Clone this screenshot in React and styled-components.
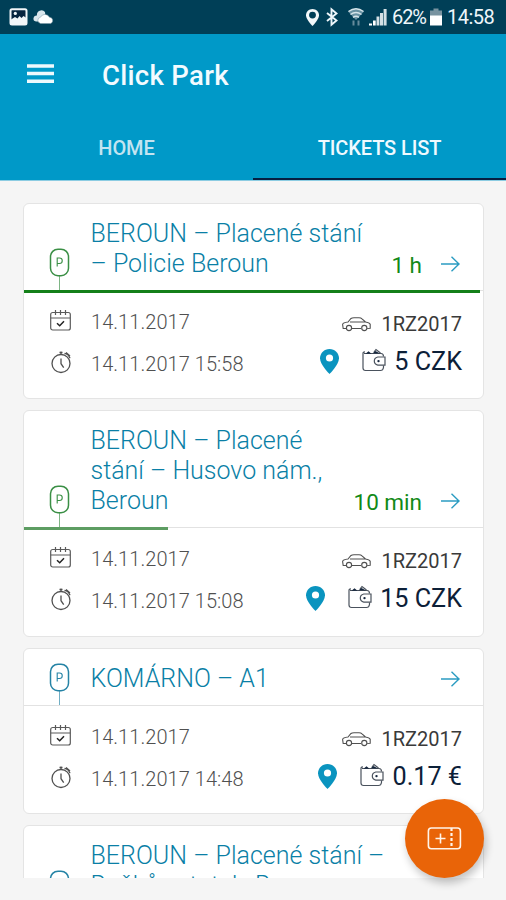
import React from "react";
import styled, { createGlobalStyle } from "styled-components";

const Global = createGlobalStyle`
  * { box-sizing: border-box; }
  body { margin: 0; background: #f5f5f5; font-family: Roboto, "Liberation Sans", sans-serif; }
  svg { display: block; flex: none; overflow: visible; }
`;

const Screen = styled.div`
  width: 506px;
  height: 900px;
  display: flex;
  flex-direction: column;
  overflow: hidden;
  background: #f5f5f5;
`;

const StatusBar = styled.div`
  height: 34px;
  flex: none;
  background: #003f57;
  color: #eef6fa;
  display: flex;
  align-items: center;
  justify-content: space-between;
  padding: 0 12px 0 9px;
`;

const StatusGroup = styled.div`
  display: flex;
  align-items: center;
  gap: ${(p) => p.$gap}px;
`;

const StatusText = styled.span`
  font-size: 20px;
  line-height: 36px;
  width: ${(p) => p.$width}px;
  white-space: nowrap;
  letter-spacing: ${(p) => p.$track}px;
`;

const AppBar = styled.header`
  height: 81px;
  flex: none;
  background: #0099c8;
  display: flex;
  align-items: center;
  padding-left: 27px;
`;

const AppTitle = styled.h1`
  margin: 2px 0 0 48px;
  font-size: 27.5px;
  font-weight: 500;
  color: #f3fbff;
  line-height: 36px;
  letter-spacing: 0.3px;
`;

const Tabs = styled.nav`
  height: 66px;
  flex: none;
  display: grid;
  grid-template-columns: 1fr 1fr;
  background: #0099c8;
  border-bottom: 1px solid #8ccce2;
`;

const Tab = styled.div`
  display: flex;
  align-items: center;
  justify-content: center;
  padding-top: 3px;
  font-size: 20px;
  font-weight: 500;
  letter-spacing: -0.1px;
  color: ${(p) => (p.$active ? "#effaff" : "#c3e4f1")};
  border-bottom: 2px solid ${(p) => (p.$active ? "#061f42" : "transparent")};
`;

const TicketList = styled.main`
  height: 697px;
  flex: none;
  overflow: hidden;
  padding: 22px 22px 0 23px;
  display: flex;
  flex-direction: column;
  gap: 11px;
`;

const Card = styled.article`
  flex: none;
  height: ${(p) => p.$height}px;
  background: #fff;
  border: 1px solid #e4e4e4;
  border-radius: 6px;
  display: flex;
  flex-direction: column;
`;

const CardHead = styled.div`
  height: ${(p) => p.$height}px;
  flex: none;
  display: flex;
  align-items: flex-end;
  padding: 0 23px 0 25px;
`;

const Place = styled.h2`
  margin: 0 0 11.5px 20.5px;
  flex: 1;
  font-size: 25px;
  line-height: 29.8px;
  font-weight: 300;
  color: #0a7fa6;
  white-space: pre;
`;

const Remaining = styled.span`
  font-size: 22.5px;
  line-height: 30px;
  color: #128a17;
  margin: 0 19px 10px 0;
`;

const ArrowSlot = styled.span`
  margin-bottom: 18px;
`;

const Track = styled.div`
  height: 3px;
  flex: none;
  background: linear-gradient(#e2e2e2, #e2e2e2) 0 0 / 100% 1px no-repeat;
`;

const Progress = styled.div`
  height: 3px;
  background: ${(p) => p.$color};
`;

const CardBody = styled.div`
  flex: 1;
  display: flex;
  justify-content: space-between;
  padding: 8px 21px 0 26px;
`;

const Column = styled.div`
  display: flex;
  flex-direction: column;
  align-items: ${(p) => p.$align};
`;

const InfoRow = styled.div`
  display: flex;
  align-items: center;
  height: 42px;
`;

const DateText = styled.span`
  font-size: 20px;
  font-weight: 300;
  color: #505050;
  margin-left: 20px;
  letter-spacing: 0.05px;
`;

const PlateRow = styled.div`
  display: flex;
  align-items: center;
  height: 46px;
`;

const Plate = styled.span`
  font-size: 20px;
  color: #3a3a3a;
  margin-left: 10px;
`;

const PriceRow = styled.div`
  display: flex;
  align-items: center;
  height: 28px;
`;

const Price = styled.span`
  font-size: 25.2px;
  color: #0c2038;
  margin-left: 8px;
`;

const WalletSlot = styled.span`
  margin-left: 23px;
`;

const Fab = styled.button`
  position: fixed;
  left: 405px;
  top: 799px;
  width: 79px;
  height: 79px;
  border: 0;
  padding: 0;
  border-radius: 50%;
  background: #e96408;
  box-shadow: 2px 5px 9px rgba(0, 0, 0, 0.24);
  display: flex;
  align-items: center;
  justify-content: center;
`;

const PictureIcon = () => (
  <svg width="19" height="18" viewBox="0 0 19 18">
    <rect x="1.5" y="1.2" width="16" height="15.3" rx="1.5" fill="#06243f" stroke="#f1f6f9" strokeWidth="2" />
    <circle cx="6.3" cy="5.4" r="1.6" fill="#f1f6f9" />
    <path d="M2 11.500l4-2.500 2.500 1.500 2-2.500 2 2 2-2 3 2V16H2z" fill="#f1f6f9" />
  </svg>
);

const CloudIcon = () => (
  <svg width="21" height="14" viewBox="0 0 21 14">
    <path d="M3 11.500a3 3 0 0 1 1-6A4.500 4.500 0 0 1 12 2l1 9.500z" fill="#d9e6ec" />
    <path d="M7.500 13.500a3.200 3.200 0 0 1 0-6.300 5 5 0 0 1 9 0 3.300 3.300 0 0 1 1.300 6.300z" fill="#fff" stroke="#7695a2" strokeWidth=".5" />
  </svg>
);

const Pin = ({ w, h, color, hole, holeColor = "#fff" }) => (
  <svg width={w} height={h} viewBox="0 0 19 25" preserveAspectRatio="none">
    <path d="M9.500 0C4.200 0 0 4.100 0 9.300 0 15.800 9.500 25 9.500 25S19 15.800 19 9.300C19 4.100 14.800 0 9.500 0z" fill={color} />
    <circle cx="9.500" cy="9" r={hole} fill={holeColor} />
  </svg>
);

const BluetoothIcon = () => (
  <svg width="12" height="18" viewBox="0 0 12 18">
    <path d="M1 5l9.500 7.500-5 4.300V1.200l5 4.300L1 13" fill="none" stroke="#eef6fa" strokeWidth="1.900" />
  </svg>
);

const WifiIcon = () => (
  <svg width="16" height="18" viewBox="0 0 16 18">
    <path d="M0 3.500q8-6 16 0L8 12z" fill="#9fbfcc" opacity=".65" />
    <path d="M.5 3.500q7.500-5.500 15 0M2.500 6.500q5.500-4 11 0M5 9.300q3-2.300 6 0" fill="none" stroke="#d5e4ea" strokeWidth="1.500" />
    <path d="M5.500 12.500v5M10.500 12.500v5" stroke="#668b9c" strokeWidth="2" />
  </svg>
);

const SignalIcon = () => (
  <svg width="18" height="18" viewBox="0 0 18 18">
    <path d="M0 17.500v-2h3v2zM4 17.500v-5h2.700v5z" fill="#fff" />
    <path d="M7.500 17.500V8.500h2.900v9zM11 17.500V5h3v12.500zM14.600 17.500V1h3v16.500z" fill="#d4e0e5" />
  </svg>
);

const BatteryIcon = () => (
  <svg width="12" height="18" viewBox="0 0 12 18">
    <path d="M3.500 .5h5v2H12V8H0V2.500h3.500z" fill="#7893a0" />
    <path d="M0 7.500h12V17.500H0z" fill="#fff" />
  </svg>
);

const MenuIcon = () => (
  <svg width="27" height="22" viewBox="0 0 27 22">
    <path d="M0 2h27M0 9.500h27M0 17.200h27" stroke="#eef9fd" strokeWidth="3.500" />
  </svg>
);

const ParkingIcon = ({ color }) => (
  <svg width="21" height="42" viewBox="0 0 21 42">
    <rect x="1.500" y="1.200" width="18" height="26.500" rx="7.500" fill="none" stroke={color} strokeWidth="1.500" />
    <path d="M8.200 18.500V10h2.300a2.700 2.700 0 0 1 0 5.500H8.200" fill="none" stroke={color} strokeWidth="1.100" />
    <path d="M10.500 28v14" stroke={color} strokeWidth="1" opacity=".65" />
  </svg>
);

const ArrowIcon = () => (
  <svg width="19" height="16" viewBox="0 0 19 16">
    <path d="M0 8h17.500M10.500.8L18 8l-7.500 7.200" fill="none" stroke="#2b9cc2" strokeWidth="1.400" />
  </svg>
);

const CalendarIcon = () => (
  <svg width="21" height="24" viewBox="0 0 21 24">
    <g fill="none" stroke="#5a5a5a" strokeWidth="1.200">
      <rect x=".7" y="2.500" width="19.600" height="17.500" rx="2" />
      <path d="M.7 8h19.600M5.500 0v5M10.500 0v5M15.500 0v5" />
      <path d="M7 13.200l2.700 2.500 4.300-4.400" stroke="#222" strokeWidth="1.500" />
    </g>
  </svg>
);

const ClockIcon = () => (
  <svg width="21" height="25" viewBox="0 0 21 25">
    <g fill="none" stroke="#505050" strokeWidth="1.300">
      <circle cx="11" cy="11.500" r="9" />
      <path d="M11-.5v3M9.500.5h3M11 6.500v5.200l2.700 4M14.500 1.300q4 .5 5.500 5M16 .5l4 3.600" />
    </g>
  </svg>
);

const CarIcon = () => (
  <svg width="29" height="15" viewBox="0 0 29 15">
    <g fill="none" stroke="#505050" strokeWidth="1.100">
      <path d="M4 11.500H1.200L.6 7.500Q1 5.500 6 5L9 1.500Q10 .7 12 .7h5q2 0 3 1.100L23.500 5q4 .6 4.700 2.300v4l-3 .2M10 11.500h9M8 5h15" />
      <circle cx="7" cy="11" r="2.600" />
      <circle cx="22.300" cy="11" r="2.600" />
    </g>
  </svg>
);

const WalletIcon = () => (
  <svg width="24" height="24" viewBox="0 0 24 24">
    <g fill="none" stroke="#4a525d" strokeWidth="1.200">
      <path d="M21.500 16.500v2q-.5 3-3 3H3.500Q1 21.500 1 19V4.500Q1 2.800 3 2.800M2 4.500h17q2.500 0 2.500 3M12 3l2-2.500L18.500 4" />
      <path d="M23 8v8.200h-7.200q-3.500-.8-3.500-4.100t3.500-4.100z" />
    </g>
    <path d="M3.500 4.800l3-2.500 3 2.500zM10.500 4.300l3-2.300 4.500 2.500z" fill="#15263d" />
    <circle cx="16.500" cy="12.100" r="1.200" fill="#15263d" />
  </svg>
);

const TicketIcon = () => (
  <svg width="35" height="23" viewBox="0 0 35 23">
    <g fill="none" stroke="#fff4ea" strokeWidth="1.600">
      <rect x="1.400" y="1" width="32" height="20.800" rx="3" />
      <path d="M13.500 6.500v10M8.500 11.500h10" />
      <path d="M24.500 1v21" strokeWidth="2.200" strokeDasharray="3 2" />
    </g>
  </svg>
);

const tickets = [
  { place: "BEROUN – Placené stání\n– Policie Beroun", remaining: "1 h", time: "14.11.2017 15:58", price: "5 CZK", height: 196, head: 86, progress: 456, bar: "#148019", mark: "#3a8f45" },
  { place: "BEROUN – Placené\nstání – Husovo nám.,\nBeroun", remaining: "10 min", time: "14.11.2017 15:08", price: "15 CZK", height: 227, head: 116, progress: 144, bar: "#5d9d62", mark: "#3a8f45" },
  { place: "KOMÁRNO – A1", time: "14.11.2017 14:48", price: "0.17 €", height: 166, head: 56, mark: "#2583a5" },
  { place: "BEROUN – Placené stání –\nBočkův statek, Beroun", time: "14.11.2017 14:28", price: "5 CZK", height: 196, head: 86, mark: "#2583a5" },
];

const Ticket = ({ data }) => (
  <Card $height={data.height}>
    <CardHead $height={data.head}>
      <ParkingIcon color={data.mark} />
      <Place>{data.place}</Place>
      {data.remaining && <Remaining>{data.remaining}</Remaining>}
      <ArrowSlot><ArrowIcon /></ArrowSlot>
    </CardHead>
    <Track>
      {data.progress && <Progress $color={data.bar} style={{ width: data.progress }} />}
    </Track>
    <CardBody>
      <Column $align="flex-start">
        <InfoRow><CalendarIcon /><DateText>14.11.2017</DateText></InfoRow>
        <InfoRow><ClockIcon /><DateText>{data.time}</DateText></InfoRow>
      </Column>
      <Column $align="flex-end">
        <PlateRow><CarIcon /><Plate>1RZ2017</Plate></PlateRow>
        <PriceRow>
          <Pin w={19} h={25} color="#0a94bf" hole={3.6} />
          <WalletSlot><WalletIcon /></WalletSlot>
          <Price>{data.price}</Price>
        </PriceRow>
      </Column>
    </CardBody>
  </Card>
);

export default function App() {
  return (
    <Screen>
      <Global />
      <StatusBar>
        <StatusGroup $gap={5}>
          <PictureIcon />
          <CloudIcon />
        </StatusGroup>
        <StatusGroup $gap={10}>
          <StatusGroup $gap={7}>
            <Pin w={13} h={17} color="#f3f8fa" hole={5} holeColor="#003f57" />
            <BluetoothIcon />
          </StatusGroup>
          <StatusGroup $gap={5}>
            <WifiIcon />
            <SignalIcon />
            <StatusGroup $gap={4}>
              <StatusText $width={34} $track={-1.1}>62%</StatusText>
              <BatteryIcon />
            </StatusGroup>
            <StatusText $width={47} $track={-0.5}>14:58</StatusText>
          </StatusGroup>
        </StatusGroup>
      </StatusBar>
      <AppBar>
        <MenuIcon />
        <AppTitle>Click Park</AppTitle>
      </AppBar>
      <Tabs>
        <Tab>HOME</Tab>
        <Tab $active>TICKETS LIST</Tab>
      </Tabs>
      <TicketList>
        {tickets.map((t, i) => <Ticket key={i} data={t} />)}
      </TicketList>
      <Fab aria-label="Buy ticket"><TicketIcon /></Fab>
    </Screen>
  );
}
